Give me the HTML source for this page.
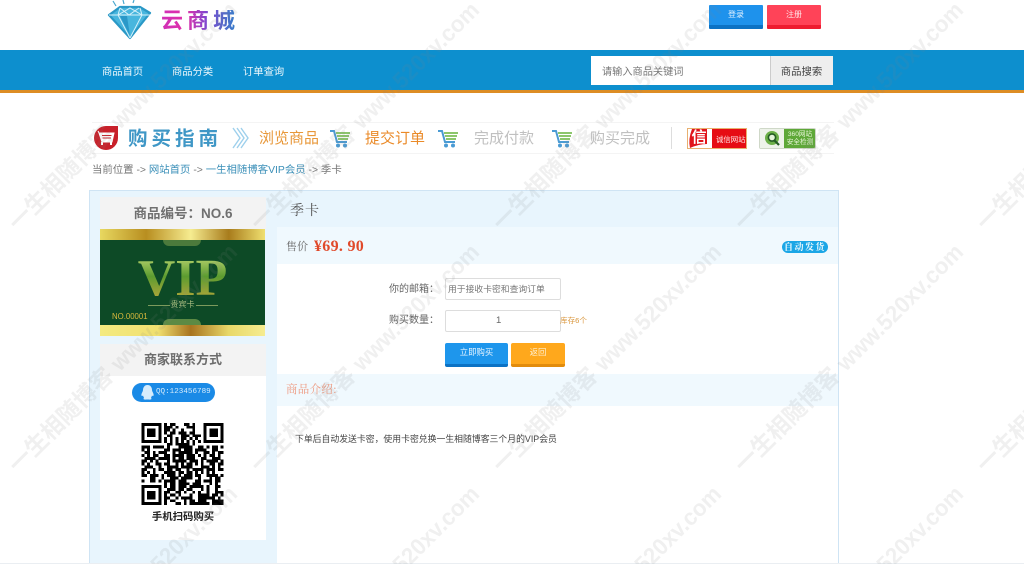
<!DOCTYPE html>
<html lang="zh">
<head>
<meta charset="utf-8">
<title>季卡</title>
<style>
html,body{margin:0;padding:0;width:1024px;height:564px;overflow:hidden;background:#fff}
#p{position:relative;width:1024px;height:564px;overflow:hidden;font-family:"Liberation Sans","Noto Sans CJK SC",sans-serif;filter:blur(.35px)}
#p div,#p span.a,#p svg{position:absolute}
.t{white-space:nowrap;line-height:1}
.c{text-align:center}
.sf{font-family:"Liberation Serif","Noto Serif CJK SC",serif}
</style>
</head>
<body>
<div id="p">

<!-- logo -->
<svg style="left:106px;top:0" width="46" height="40" viewBox="0 0 46 40">
<g stroke="#4aa8cf" stroke-width="1.2" fill="none"><path d="M10 6L7 1M18 4L17 0M27 3L28 0"/></g>
<path d="M3 15L14 7L34 7L44 13L24 38Z" fill="#48b6de" stroke="#2a98c6" stroke-width="2.2" stroke-linejoin="round"/>
<path d="M3 15H44M14 8L12 15L24 38M34 8L36 15L24 38M14 8L23 15L33 8M12 15L24 8L36 15" fill="none" stroke="#d6f1fa" stroke-width="1"/>
<path d="M14 16L24 36L21 16Z" fill="#2a98c8"/>
</svg>
<div class="t" style="left:161px;top:10px;font-size:22px;letter-spacing:4px;font-weight:bold;background:linear-gradient(90deg,#d030b8 0%,#e030a8 32%,#8048d0 58%,#2d84c8 100%);-webkit-background-clip:text;background-clip:text;color:transparent;">云商城</div>

<!-- top buttons -->
<div style="left:709px;top:5px;width:54px;height:24px;background:#1e92ec;border-bottom:4px solid #0c72c4;box-sizing:border-box;border-radius:1px"></div>
<div class="t c" style="left:709px;top:11px;width:54px;font-size:8px;color:#e8f4ff">登录</div>
<div style="left:767px;top:5px;width:54px;height:24px;background:#ff4358;border-bottom:4px solid #ee1c30;box-sizing:border-box;border-radius:1px"></div>
<div class="t c" style="left:767px;top:11px;width:54px;font-size:8px;color:#ffe6e8">注册</div>

<!-- nav -->
<div style="left:0;top:50px;width:1024px;height:40px;background:#0d8fce"></div>
<div style="left:0;top:90px;width:1024px;height:3px;background:#dd8d24"></div>
<div class="t" style="left:102px;top:68px;font-size:10.3px;color:#eef8fc">商品首页</div>
<div class="t" style="left:172px;top:68px;font-size:10.3px;color:#eef8fc">商品分类</div>
<div class="t" style="left:243px;top:68px;font-size:10.3px;color:#eef8fc">订单查询</div>
<div style="left:591px;top:56px;width:179px;height:29px;background:#fff"></div>
<div class="t" style="left:602px;top:68px;font-size:10.2px;color:#777">请输入商品关键词</div>
<div style="left:770px;top:56px;width:63px;height:29px;background:#eee;border-left:1px solid #ccc;box-sizing:border-box"></div>
<div class="t c" style="left:770px;top:68px;width:63px;font-size:10.4px;color:#444">商品搜索</div>

<!-- guide -->
<div style="left:92px;top:122px;width:742px;height:32px;border-top:1px solid #f4f4f4;border-bottom:1px solid #f4f4f4;box-sizing:border-box"></div>
<svg style="left:93px;top:125px" width="27" height="27" viewBox="0 0 27 27">
<path d="M13 1H25V13A12 12 0 1 1 13 1Z" fill="#c8202a"/>
<path d="M6 8H21L19 17H9ZM6 8L5 6" fill="#fff" stroke="#fff"/>
<path d="M9 10.5H18.5M9.5 13H18" stroke="#c8202a" stroke-width="1"/>
<path d="M9 17V20M18 17V20" stroke="#fff" stroke-width="2"/>
</svg>
<div class="t" style="left:128px;top:130px;font-size:19.5px;font-weight:bold;letter-spacing:4px;color:#3f97c6">购买指南</div>
<svg style="left:232px;top:127px" width="17" height="22" viewBox="0 0 17 22"><path d="M1 1L8 11L1 21M5 1L12 11L5 21M9 1L16 11L9 21" fill="none" stroke="#9ed0ec" stroke-width="1.4"/></svg>
<div class="t" style="left:259px;top:131px;font-size:15px;color:#e8983a">浏览商品</div>
<svg style="left:330px;top:130px" width="20" height="18" viewBox="0 0 20 18"><path d="M0 1H4L7 12H17" fill="none" stroke="#4a9bd4" stroke-width="2"/><path d="M6 3H20M7 6H19M8 9H18" stroke="#8cc66c" stroke-width="2"/><circle cx="8" cy="15.5" r="2" fill="#4a9bd4"/><circle cx="15" cy="15.5" r="2" fill="#4a9bd4"/></svg>
<div class="t" style="left:365px;top:131px;font-size:15px;color:#ea8a28">提交订单</div>
<svg style="left:438px;top:130px" width="20" height="18" viewBox="0 0 20 18"><path d="M0 1H4L7 12H17" fill="none" stroke="#4a9bd4" stroke-width="2"/><path d="M6 3H20M7 6H19M8 9H18" stroke="#8cc66c" stroke-width="2"/><circle cx="8" cy="15.5" r="2" fill="#4a9bd4"/><circle cx="15" cy="15.5" r="2" fill="#4a9bd4"/></svg>
<div class="t" style="left:474px;top:131px;font-size:15px;color:#c0c0c0">完成付款</div>
<svg style="left:552px;top:130px" width="20" height="18" viewBox="0 0 20 18"><path d="M0 1H4L7 12H17" fill="none" stroke="#4a9bd4" stroke-width="2"/><path d="M6 3H20M7 6H19M8 9H18" stroke="#8cc66c" stroke-width="2"/><circle cx="8" cy="15.5" r="2" fill="#4a9bd4"/><circle cx="15" cy="15.5" r="2" fill="#4a9bd4"/></svg>
<div class="t" style="left:590px;top:131px;font-size:15px;color:#c0c0c0">购买完成</div>
<div style="left:671px;top:127px;width:1px;height:22px;background:#ddd"></div>

<div style="left:687px;top:128px;width:60px;height:21px;background:#e60d14;border:1px solid #e8b070;box-sizing:border-box"></div>
<div style="left:688px;top:129px;width:24px;height:19px;background:#fff"></div>
<svg style="left:688px;top:129px" width="24" height="19" viewBox="0 0 24 19"><path d="M4 0H19V15Q11 15 2 19Q0 10 4 0Z" fill="#e0141c"/></svg>
<div class="t c" style="left:688px;top:129px;width:22px;height:19px;font-size:15px;line-height:18px;font-weight:bold;color:#fff">信</div>
<div class="t" style="left:716px;top:136px;font-size:7.4px;color:#ffe0e0">诚信网站</div>

<div style="left:759px;top:128px;width:57px;height:21px;background:#5ea838;border-radius:2px;border:1px solid #cfd8c8;box-sizing:border-box"></div>
<div style="left:760px;top:129px;width:24px;height:19px;background:#eef3ea"></div>
<svg style="left:764px;top:130px" width="18" height="17" viewBox="0 0 18 17"><circle cx="8" cy="8" r="7" fill="#6cb048"/><circle cx="8" cy="7.5" r="3.6" fill="#e4f4da" stroke="#245c24" stroke-width="1.6"/><path d="M10.5 10.5L15 15" stroke="#245c24" stroke-width="2.2"/></svg>
<div class="t c" style="left:784px;top:131px;width:32px;font-size:6.6px;color:#e8f6d8;line-height:8px">360网站<br>安全检测</div>

<!-- breadcrumb -->
<div class="t" style="left:92px;top:166px;font-size:10.4px;color:#777">当前位置 -&gt; <span style="color:#3a8fb8">网站首页</span> -&gt; <span style="color:#3a8fb8">一生相随博客VIP会员</span> -&gt; 季卡</div>

<!-- main panel -->
<div style="left:89px;top:190px;width:750px;height:374px;background:#fff;border:1px solid #cfe4f4;border-bottom:none;box-sizing:border-box"></div>
<div style="left:90px;top:191px;width:187px;height:373px;background:#e8f5fd"></div>
<div style="left:0;top:563px;width:1024px;height:1px;background:#eaeef2"></div>

<!-- card 1 -->
<div style="left:100px;top:197px;width:166px;height:32px;background:#f3f3f3"></div>
<div class="t c" style="left:100px;top:207px;width:166px;font-size:13.5px;font-weight:bold;color:#707070">商品编号：NO.6</div>

<!-- VIP image -->
<div style="left:100px;top:229px;width:165px;height:107px;background:#0d4a26;overflow:hidden">
  <div style="left:0;top:0;width:165px;height:11px;background:linear-gradient(90deg,#e8d860 0%,#b88e20 28%,#f6ec90 55%,#a87c1c 78%,#f0e070 100%)"></div>
  <div style="left:0;top:96px;width:165px;height:11px;background:linear-gradient(90deg,#f4ea80 0%,#f0e070 35%,#a87420 55%,#e8d868 78%,#f6ec90 100%)"></div>
  <div style="left:63px;top:11px;width:38px;height:6px;border-radius:0 0 19px 19px;background:#4c7a3c"></div>
  <div style="left:63px;top:90px;width:38px;height:6px;border-radius:19px 19px 0 0;background:#5c8a44"></div>
  <div class="t sf c" style="left:0;top:24px;width:165px;font-size:52px;background:linear-gradient(180deg,#c8dc78 0%,#5c9c30 45%,#c8a83c 100%);-webkit-background-clip:text;background-clip:text;color:transparent;font-weight:bold">VIP</div>
  <div style="left:48px;top:76px;width:22px;height:1px;background:#7c9a5c"></div>
  <div style="left:96px;top:76px;width:22px;height:1px;background:#7c9a5c"></div>
  <div class="t c" style="left:0;top:72px;width:165px;font-size:8px;color:#a8bc80">贵宾卡</div>
  <div class="t" style="left:12px;top:84px;font-size:7.8px;color:#d8b83c">NO.00001</div>
</div>

<!-- card 2 -->
<div style="left:100px;top:344px;width:166px;height:196px;background:#fff"></div>
<div style="left:100px;top:344px;width:166px;height:32px;background:#f3f3f3"></div>
<div class="t c" style="left:100px;top:353px;width:166px;font-size:13px;font-weight:bold;color:#6c6c6c">商家联系方式</div>
<div style="left:132px;top:383px;width:83px;height:19px;border-radius:10px;background:#1a8ae6"></div>
<svg style="left:139px;top:384px" width="17" height="17" viewBox="0 0 17 17"><path d="M8.500 1C5.500 1 4 3.500 4 6C4 7 3 8.500 2.500 10C2 12 3 12.500 4 11.500C4.500 13 5 13.500 5 14C4 14.500 4.500 16 7 15.500L10 15.500C12.500 16 13 14.500 12 14C12 13.500 12.500 13 13 11.500C14 12.500 15 12 14.500 10C14 8.500 13 7 13 6C13 3.500 11.500 1 8.500 1Z" fill="#d6ecfc"/></svg>
<div class="t" style="left:156px;top:389px;font-size:7.6px;color:#d6ecfc;font-family:'Liberation Mono',monospace">QQ:123456789</div>

<!-- QR -->
<svg style="left:141px;top:423px" width="83" height="82" viewBox="0 0 29 29" shape-rendering="crispEdges">
<g fill="none" stroke="#000" stroke-width="1">
<path d="M.5 .5h6v6h-6zM22.500 .5h6v6h-6zM.5 22.500h6v6h-6z"/>
</g>
<path d="M2 2h3v3h-3zM24 2h3v3h-3zM2 24h3v3h-3z" fill="#000"/>
<g stroke="#000" stroke-width="1.02" fill="none">
<path d="M8 .5h13" stroke-dasharray="1 1 2 3 2 1 1 99"/>
<path d="M8 1.500h13" stroke-dasharray="3 1 1 3 3 99"/>
<path d="M8 2.500h13" stroke-dasharray="2 1 1 2 1 3 1 99"/>
<path d="M8 3.500h13" stroke-dasharray="1 1 2 1 3 1 2 99"/>
<path d="M8 4.500h13" stroke-dasharray="0 1 2 3 3 1 3 99"/>
<path d="M8 5.500h13" stroke-dasharray="1 1 1 1 1 1 2 1 1 1 1 99"/>
<path d="M8 6.500h13" stroke-dasharray="1 1 1 1 1 1 1 1 1 1 1 1 1 99"/>
<path d="M0 7.500h29" stroke-dasharray="0 9 2 1 5 1 1 99"/>
<path d="M0 8.500h29" stroke-dasharray="3 1 4 1 1 3 5 2 2 1 1 1 2 1 1 99"/>
<path d="M0 9.500h29" stroke-dasharray="1 1 1 5 2 1 3 1 3 1 4 2 2 99"/>
<path d="M0 10.500h29" stroke-dasharray="0 1 2 1 1 1 3 2 1 1 5 1 1 2 2 1 1 1 2 99"/>
<path d="M0 11.500h29" stroke-dasharray="1 1 1 1 2 2 2 1 4 1 3 1 1 1 1 1 2 1 1 99"/>
<path d="M0 12.500h29" stroke-dasharray="0 1 4 1 4 1 1 1 2 1 3 2 2 2 3 99"/>
<path d="M0 13.500h29" stroke-dasharray="2 1 1 1 1 3 1 1 5 1 3 1 1 1 4 1 1 99"/>
<path d="M0 14.500h29" stroke-dasharray="1 1 1 2 2 1 2 2 1 1 1 1 2 1 1 1 1 2 2 1 2 99"/>
<path d="M0 15.500h29" stroke-dasharray="0 1 3 2 1 2 4 1 4 3 3 1 1 1 1 99"/>
<path d="M0 16.500h29" stroke-dasharray="2 2 1 1 2 1 2 1 2 2 1 1 4 1 3 1 2 99"/>
<path d="M0 17.500h29" stroke-dasharray="1 1 1 1 1 3 4 1 2 1 2 1 1 1 1 1 1 1 1 99"/>
<path d="M0 18.500h29" stroke-dasharray="2 1 3 1 1 1 3 1 1 1 3 1 2 2 4 1 1 99"/>
<path d="M0 19.500h29" stroke-dasharray="0 3 2 2 1 2 3 1 4 2 1 3 1 1 2 99"/>
<path d="M0 20.500h29" stroke-dasharray="1 2 2 1 1 1 4 1 3 3 2 1 3 1 2 99"/>
<path d="M0 21.500h29" stroke-dasharray="0 8 1 1 2 1 4 1 3 3 1 1 1 99"/>
<path d="M8 22.500h21" stroke-dasharray="1 1 2 1 3 1 5 1 1 2 2 99"/>
<path d="M8 23.500h21" stroke-dasharray="0 1 3 1 2 1 2 3 1 1 1 2 1 99"/>
<path d="M8 24.500h21" stroke-dasharray="2 2 2 1 1 2 1 1 1 2 1 2 3 99"/>
<path d="M8 25.500h21" stroke-dasharray="1 1 2 1 1 3 1 2 4 1 2 1 1 99"/>
<path d="M8 26.500h21" stroke-dasharray="2 2 1 1 4 2 6 1 1 99"/>
<path d="M8 27.500h21" stroke-dasharray="1 1 2 3 1 1 2 1 3 2 4 99"/>
<path d="M8 28.500h21" stroke-dasharray="1 3 2 1 1 1 7 1 4 99"/>
</g>
</svg>
<div class="t c" style="left:100px;top:513px;width:166px;font-size:10.4px;font-weight:bold;color:#222">手机扫码购买</div>

<!-- right column -->
<div style="left:277px;top:191px;width:561px;height:36px;background:#e8f5fd"></div>
<div class="t sf" style="left:290px;top:205px;font-size:14px;letter-spacing:1px;color:#555">季卡</div>
<div style="left:277px;top:227px;width:561px;height:37px;background:#f0f9fe"></div>
<div class="t sf" style="left:286px;top:242px;font-size:11px;color:#666">售价</div>
<div class="t sf" style="left:314px;top:239px;font-size:16px;font-weight:bold;letter-spacing:.3px;color:#e0492a">¥69. 90</div>
<div style="left:782px;top:241px;width:46px;height:12px;border-radius:6px;background:#1ba6e6"></div>
<div class="t sf c" style="left:782px;top:242.500px;width:46px;font-size:9px;font-weight:bold;letter-spacing:1.500px;color:#f0fbff">自动发货</div>

<!-- form -->
<div class="t" style="left:389px;top:285px;font-size:10px;color:#666">你的邮箱：</div>
<div style="left:445px;top:278px;width:116px;height:22px;background:#fff;border:1px solid #ddd;border-radius:2px;box-sizing:border-box"></div>
<div class="t" style="left:448px;top:285px;font-size:8.800px;color:#777">用于接收卡密和查询订单</div>
<div class="t" style="left:389px;top:316px;font-size:10px;color:#666">购买数量：</div>
<div style="left:445px;top:310px;width:116px;height:22px;background:#fff;border:1px solid #ddd;border-radius:2px;box-sizing:border-box"></div>
<div class="t" style="left:496px;top:316px;font-size:9.5px;color:#666">1</div>
<div class="t" style="left:560px;top:317px;font-size:7.6px;color:#d9963c">库存6个</div>
<div style="left:445px;top:343px;width:63px;height:24px;background:#1e96ec;border-bottom:3px solid #0c72c4;box-sizing:border-box;border-radius:2px"></div>
<div class="t c" style="left:445px;top:348px;width:63px;font-size:8.4px;color:#e6f4ff">立即购买</div>
<div style="left:511px;top:343px;width:54px;height:24px;background:#ffa81c;border-bottom:3px solid #e28c0c;box-sizing:border-box;border-radius:2px"></div>
<div class="t c" style="left:511px;top:348px;width:54px;font-size:8.4px;color:#ffeecc">返回</div>

<!-- description -->
<div style="left:277px;top:374px;width:561px;height:32px;background:#f0f9fe"></div>
<div class="t sf" style="left:286px;top:385px;font-size:11.500px;letter-spacing:.3px;color:#ee9a80">商品介绍:</div>
<div class="t" style="left:295px;top:435px;font-size:8.850px;color:#444">下单后自动发送卡密，使用卡密兑换一生相随博客三个月的VIP会员</div>

<!-- watermark -->
<svg style="left:0;top:0;overflow:hidden" width="1024" height="564" viewBox="0 0 1024 564">
<defs>
<g id="w2" transform="rotate(-45)"><text x="144" y="0" font-family="'Liberation Sans',sans-serif" font-size="23" font-weight="bold" fill="#808080" fill-opacity=".12" textLength="168" lengthAdjust="spacingAndGlyphs">www.520xv.com</text></g>
<g id="w1" transform="rotate(-45)"><text x="0" y="0" font-family="'Noto Sans CJK SC',sans-serif" font-size="23" font-weight="bold" fill="#808080" fill-opacity=".12" textLength="137" lengthAdjust="spacingAndGlyphs">一生相随博客</text></g>
</defs>
<use href="#w1" x="18" y="232"/><use href="#w2" x="18" y="232"/>
<use href="#w1" x="260" y="232"/><use href="#w2" x="260" y="232"/>
<use href="#w1" x="502" y="232"/><use href="#w2" x="502" y="232"/>
<use href="#w1" x="744" y="232"/><use href="#w2" x="744" y="232"/>
<use href="#w1" x="986" y="232"/>
<use href="#w1" x="18" y="474"/><use href="#w2" x="18" y="474"/>
<use href="#w1" x="260" y="474"/><use href="#w2" x="260" y="474"/>
<use href="#w1" x="502" y="474"/><use href="#w2" x="502" y="474"/>
<use href="#w1" x="744" y="474"/><use href="#w2" x="744" y="474"/>
<use href="#w1" x="986" y="474"/>
<use href="#w2" x="18" y="716"/><use href="#w2" x="260" y="716"/><use href="#w2" x="502" y="716"/><use href="#w2" x="744" y="716"/>
</svg>

</div>
</body>
</html>
